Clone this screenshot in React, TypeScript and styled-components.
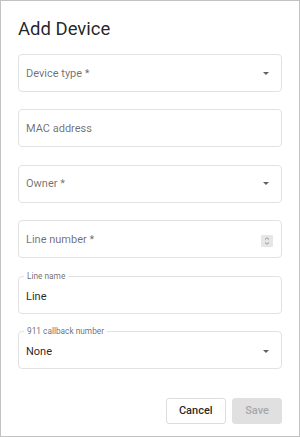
import React from "react";
import styled, { createGlobalStyle } from "styled-components";

const Global = createGlobalStyle`
  html, body { margin: 0; padding: 0; background: #fff; }
  body { font-family: Roboto, "Noto Sans", "Liberation Sans", sans-serif; }
`;

const Dialog = styled.div`
  box-sizing: border-box;
  width: 300px;
  height: 437px;
  border: 1px solid #c2c2c2;
  padding: 16px 17px 0 17px;
  display: flex;
  flex-direction: column;
  background: #fff;
`;

const Title = styled.h2`
  margin: 0;
  font-size: 18.5px;
  line-height: 24px;
  font-weight: 400;
  color: rgba(0, 0, 0, 0.87);
`;

const Fields = styled.div`
  margin-top: 13px;
  display: flex;
  flex-direction: column;
  gap: 17.4px;
`;

const Field = styled.div<{ $filled?: boolean }>`
  position: relative;
  box-sizing: border-box;
  height: 38px;
  border: 1px solid #e2e2e2;
  border-radius: 4px;
  display: flex;
  align-items: center;
  padding: ${(p) => (p.$filled ? "3px 12px 0 7px" : "0 12px 0 7px")};
  font-size: 11px;
`;

const Placeholder = styled.span`
  flex: 1;
  color: rgba(0, 0, 0, 0.58);
`;

const Value = styled.span`
  flex: 1;
  color: rgba(0, 0, 0, 0.87);
`;

const FloatLabel = styled.span`
  position: absolute;
  top: -6px;
  left: 5px;
  padding: 0 3px;
  background: #fff;
  font-size: 8.3px;
  line-height: 10px;
  color: rgba(0, 0, 0, 0.6);
`;

const Arrow = styled.span`
  width: 0;
  height: 0;
  border-left: 3px solid transparent;
  border-right: 3px solid transparent;
  border-top: 3px solid #616161;
`;

const Spinner = styled.span`
  width: 12px;
  height: 12px;
  margin-top: 3px;
  margin-right: -4px;
  background: #e6e6e6;
  border-radius: 1px;
  display: flex;
  align-items: center;
  justify-content: center;
`;

const Actions = styled.div`
  margin-top: 29px;
  display: flex;
  justify-content: flex-end;
  gap: 6.6px;
`;

const Button = styled.button<{ $disabled?: boolean }>`
  box-sizing: border-box;
  height: 26px;
  min-width: 48px;
  padding: 0 12px;
  border-radius: 3px;
  font-family: Roboto, "Liberation Sans", sans-serif;
  font-size: 11px;
  font-weight: 500;
  border: 1px solid ${(p) => (p.$disabled ? "#e0e0e0" : "#dcdcdc")};
  background: ${(p) => (p.$disabled ? "#e0e0e0" : "#fff")};
  color: ${(p) => (p.$disabled ? "#a8a8a8" : "rgba(0,0,0,0.87)")};
`;

const SpinIcon = () => (
  <svg width="8" height="10" viewBox="0 0 8 10">
    <path d="M2 3.5 L4 1.8 L6 3.5" fill="none" stroke="#8a8a8a" strokeWidth="0.9" />
    <path d="M2 6.5 L4 8.2 L6 6.5" fill="none" stroke="#8a8a8a" strokeWidth="0.9" />
  </svg>
);

export default function App() {
  return (
    <>
      <Global />
      <Dialog>
        <Title>Add Device</Title>
        <Fields>
          <Field>
            <Placeholder>Device type *</Placeholder>
            <Arrow />
          </Field>
          <Field>
            <Placeholder>MAC address</Placeholder>
          </Field>
          <Field>
            <Placeholder>Owner *</Placeholder>
            <Arrow />
          </Field>
          <Field>
            <Placeholder>Line number *</Placeholder>
            <Spinner>
              <SpinIcon />
            </Spinner>
          </Field>
          <Field $filled>
            <FloatLabel>Line name</FloatLabel>
            <Value>Line</Value>
          </Field>
          <Field $filled>
            <FloatLabel>911 callback number</FloatLabel>
            <Value>None</Value>
            <Arrow />
          </Field>
        </Fields>
        <Actions>
          <Button>Cancel</Button>
          <Button $disabled disabled>
            Save
          </Button>
        </Actions>
      </Dialog>
    </>
  );
}
